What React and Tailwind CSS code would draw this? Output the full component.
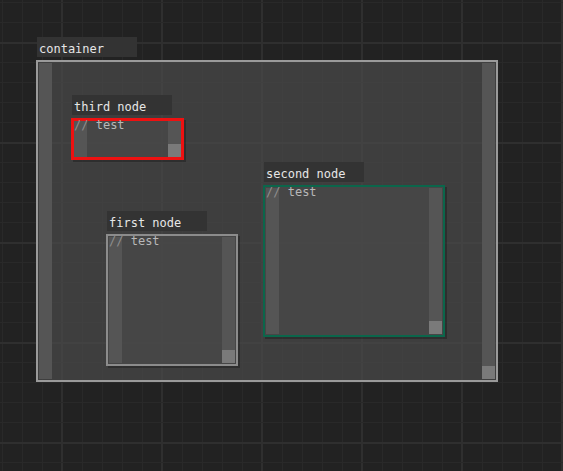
const W = 563;
const H = 471;

// grid lines: minor every 20px, major every 100px
const cols = [];
for (let x = 2; x < W; x += 20) cols.push(x);
const rows = [];
for (let y = 2; y < H; y += 20) rows.push(y);

const nodes = [
  {
    id: "container",
    label: "container",
    pos: "left-[36px] top-[37px]",
    box: "w-[462px] h-[322px] border-2 border-[#9a9a9a] p-px bg-[rgba(74,74,74,0.7)]",
    code: false,
  },
  {
    id: "third",
    label: "third node",
    pos: "left-[71px] top-[95px]",
    box: "w-[113px] h-[42px] border-[3px] border-[#ee1111] bg-[rgba(72,72,72,0.85)] shadow-[2px_2px_0_rgba(0,0,0,0.25)]",
    code: true,
  },
  {
    id: "second",
    label: "second node",
    pos: "left-[263px] top-[162px]",
    box: "w-[182px] h-[152px] border-2 border-[#0b664b] p-px bg-[rgba(72,72,72,0.85)] shadow-[2px_2px_0_rgba(0,0,0,0.25)]",
    code: true,
  },
  {
    id: "first",
    label: "first node",
    pos: "left-[106px] top-[211px]",
    box: "w-[132px] h-[132px] border-2 border-[#8c8c8c] p-px bg-[rgba(72,72,72,0.85)] shadow-[2px_2px_0_rgba(0,0,0,0.25)]",
    code: true,
  },
];

const GridLines = () => (
  <svg className="absolute inset-0" width={W} height={H}>
    {cols.map((x) =>
      (x - 62) % 100 === 0 ? (
        <rect key={"c" + x} x={x - 1} y={0} width={2} height={H} fill="#2f2f2f" />
      ) : (
        <rect key={"c" + x} x={x} y={0} width={1} height={H} fill="#292929" />
      )
    )}
    {rows.map((y) =>
      (y - 42) % 100 === 0 ? (
        <rect key={"r" + y} x={0} y={y} width={W} height={2} fill="#2f2f2f" />
      ) : (
        <rect key={"r" + y} x={0} y={y} width={W} height={1} fill="#292929" />
      )
    )}
  </svg>
);

const Node = ({ node }) => (
  <div className={`absolute flex flex-col gap-[3px] ${node.pos}`}>
    <div className="ml-px h-5 w-[100px] bg-[#333333] pl-[2px] text-[12px] leading-6 text-[#e6e6e6]">
      {node.label}
    </div>
    <div className={node.box}>
      <div className="relative flex h-full">
        <div className="w-[13px] bg-[#555555]" />
        <div className="flex-1" />
        <div className="flex w-[13px] flex-col justify-end bg-[#555555]">
          <div className="h-[13px] bg-[#7a7a7a]" />
        </div>
        {node.code && (
          <div className="absolute left-0 top-[-3px] whitespace-pre text-[12px] leading-[14px]">
            <span className="text-[#8e8e8e]">//</span>
            <span className="text-[#b8b8b8]"> test</span>
          </div>
        )}
      </div>
    </div>
  </div>
);

export default function App() {
  return (
    <div className="relative h-[471px] w-[563px] overflow-hidden bg-[#222222] font-['DejaVu_Sans_Mono',monospace]">
      <GridLines />
      {nodes.map((n) => (
        <Node key={n.id} node={n} />
      ))}
    </div>
  );
}
